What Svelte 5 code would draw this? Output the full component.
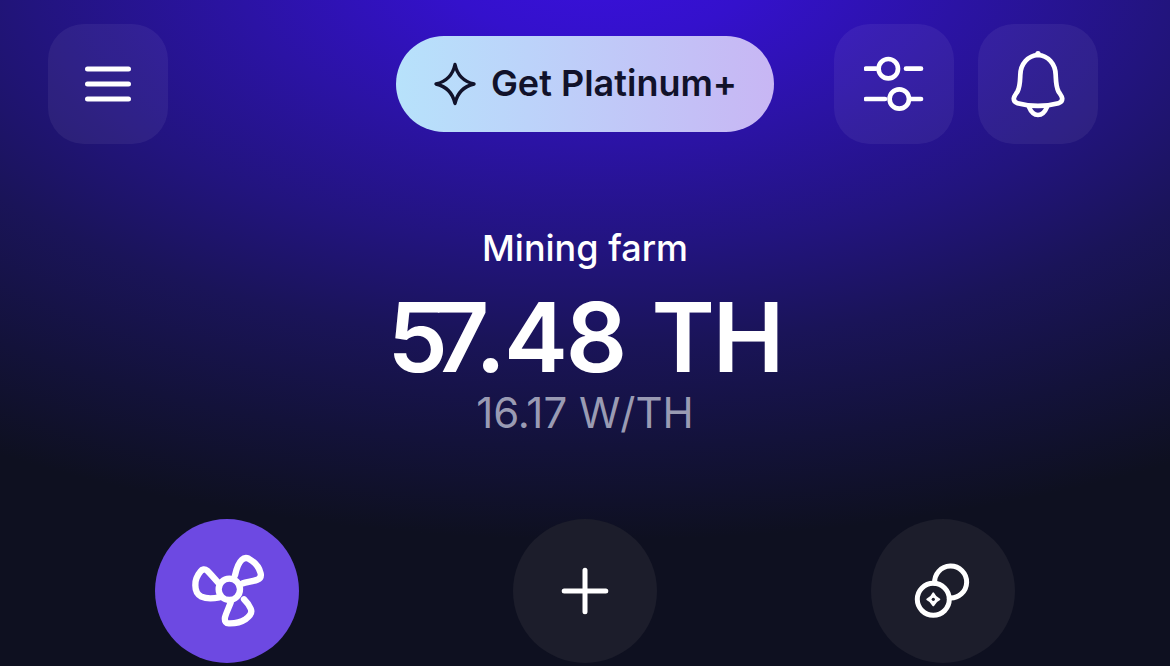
<script>
  const stats = { label: 'Mining farm', unit: 'TH', efficiency: '16.17 W/TH' };
</script>

<main class="screen">
  <header class="top">
    <button class="tile" aria-label="Menu">
      <svg width="60" height="60" viewBox="0 0 60 60" fill="none" stroke="#fff" stroke-width="5" stroke-linecap="round">
        <path d="M9.5 15h41M9.5 30h41M9.5 45h41" />
      </svg>
    </button>

    <button class="pill">
      <svg width="44" height="44" viewBox="0 0 44 44" fill="none" stroke="#11122a" stroke-width="3.4" stroke-linejoin="round">
        <path d="M22 2.5C24 12 30.5 19.5 41 22C30.5 24.5 24 32 22 41.5C20 32 13.5 24.5 3 22C13.5 19.5 20 12 22 2.5Z" />
      </svg>
      <span class="pill-text">Get Platinum+</span>
    </button>

    <div class="right">
      <button class="tile" aria-label="Filters">
        <svg width="60" height="60" viewBox="0 0 60 60" fill="none" stroke="#fff" stroke-width="4.7" stroke-linecap="round">
          <path d="M2 14.7h10M42 14.7h15M2 45h19M47 45h10" />
          <circle cx="24.3" cy="14.7" r="9.7" />
          <circle cx="35.3" cy="45" r="9.7" />
        </svg>
      </button>
      <button class="tile" aria-label="Notifications">
        <svg width="60" height="70" viewBox="0 0 60 70" fill="none" stroke="#fff" stroke-width="4.7" stroke-linecap="round" stroke-linejoin="round">
          <path d="M30 6C20 6.5 12.5 15 12.3 26C12 33 12 38 9.5 42.5C8 45 6 47 5.8 49.5C5.7 51.6 7 53.5 9.5 54.2C22 57.5 38 57.5 50.5 54.2C53 53.5 54.3 51.6 54.2 49.5C54 47 52 45 50.5 42.5C48 38 48 33 47.7 26C47.5 15 40 6.5 30 6Z" />
          <path d="M30 4.8v0.4" stroke-width="5.4" />
          <path d="M21 58C23 63 26 66 30 66C34 66 37 63 39 58" />
        </svg>
      </button>
    </div>
  </header>

  <section class="stats">
    <p class="label">{stats.label}</p>
    <p class="value"><span class="tight">5</span>7.48 {stats.unit}</p>
    <p class="eff">{stats.efficiency}</p>
  </section>

  <nav class="actions">
    <button class="round active" aria-label="Farm">
      <svg width="80" height="80" viewBox="0 0 240 240" fill="none" stroke="#fff" stroke-width="19" stroke-linecap="round" stroke-linejoin="round">
        <g transform="translate(7 -5)">
          <circle cx="120" cy="120" r="32" />
          <path d="M137 78C141 60 148 40 157 32C163 26 172 25 178 28C196 38 210 54 214 72C216 82 212 88 204 91C190 96 174 98 160 102" />
          <path d="M90 104C78 90 64 74 54 64C46 58 38 60 34 66C24 78 17 92 18 108C18 124 24 136 36 142C50 148 70 148 90 144" />
          <path d="M124 160C118 176 110 192 107 204C105 216 110 224 122 222C138 222 156 218 168 210C182 200 190 190 184 178C180 168 172 158 164 150" />
        </g>
      </svg>
    </button>
    <button class="round" aria-label="Add">
      <svg width="60" height="60" viewBox="0 0 60 60" fill="none" stroke="#fff" stroke-width="5" stroke-linecap="round">
        <path d="M9.2 30h41.6M30 9.2v41.6" />
      </svg>
    </button>
    <button class="round" aria-label="Coins">
      <svg width="60" height="60" viewBox="0 0 60 60" fill="none" stroke="#fff" stroke-width="5" stroke-linecap="round">
        <circle cx="20.3" cy="38.3" r="16" />
        <path d="M21.7 22.35A16 16 0 1 1 36.3 36.95" />
        <path d="M20.3 32.3C21.6 35.3 23.3 37 26.3 38.3C23.3 39.6 21.6 41.3 20.3 44.3C19 41.3 17.3 39.6 14.3 38.3C17.3 37 19 35.3 20.3 32.3Z" fill="#fff" stroke-width="2" stroke-linejoin="round" />
        <circle cx="20.3" cy="38.3" r="1.6" fill="#1c1d2b" stroke="none" />
      </svg>
    </button>
  </nav>
</main>

<style>
  :global(body) {
    margin: 0;
    background: #0e1020;
  }

  .screen {
    width: 1170px;
    height: 666px;
    overflow: hidden;
    box-sizing: border-box;
    padding-top: 24px;
    font-family: Inter, "Noto Sans", sans-serif;
    color: #fff;
    background:
      radial-gradient(ellipse 1150px 580px at 600px -40px, #3a10dc 0%, #3411cc 14%, #2b13a4 32%, #22147e 50%, #1a1459 66%, #13123a 84%, #0e1020 100%);
  }

  button {
    border: 0;
    padding: 0;
    margin: 0;
    color: inherit;
    font: inherit;
    display: flex;
    align-items: center;
    justify-content: center;
  }

  .top {
    display: flex;
    align-items: center;
    padding-left: 48px;
  }

  .tile {
    width: 120px;
    height: 120px;
    border-radius: 36px;
    background: rgba(255, 255, 255, 0.06);
  }

  .pill {
    margin-left: 228px;
    width: 378px;
    height: 96px;
    border-radius: 48px;
    gap: 14px;
    background: linear-gradient(90deg, #b7e2fb 0%, #bcd3fa 35%, #c8b6f4 100%);
    color: #11122a;
    font-size: 36px;
    font-weight: 600;
  }

  .pill-text {
    padding-bottom: 2px;
  }

  .right {
    margin-left: 60px;
    display: flex;
    gap: 24px;
  }

  .stats {
    margin-top: 80px;
    text-align: center;
  }

  .stats p {
    margin: 0;
  }

  .label {
    font-size: 36px;
    font-weight: 500;
    line-height: 48px;
  }

  .stats .value {
    margin-top: 13px;
    font-size: 96px;
    font-weight: 600;
    line-height: 104px;
    letter-spacing: -2px;
    word-spacing: 4px;
  }

  .tight {
    letter-spacing: -14px;
  }

  .eff {
    font-size: 42px;
    font-weight: 400;
    line-height: 48px;
    color: #9a9bb3;
  }

  .actions {
    margin-top: 82px;
    display: flex;
    justify-content: center;
    gap: 214px;
  }

  .round {
    width: 144px;
    height: 144px;
    border-radius: 50%;
    background: #1c1d2b;
  }

  .active {
    background: #6d49e2;
  }
</style>
